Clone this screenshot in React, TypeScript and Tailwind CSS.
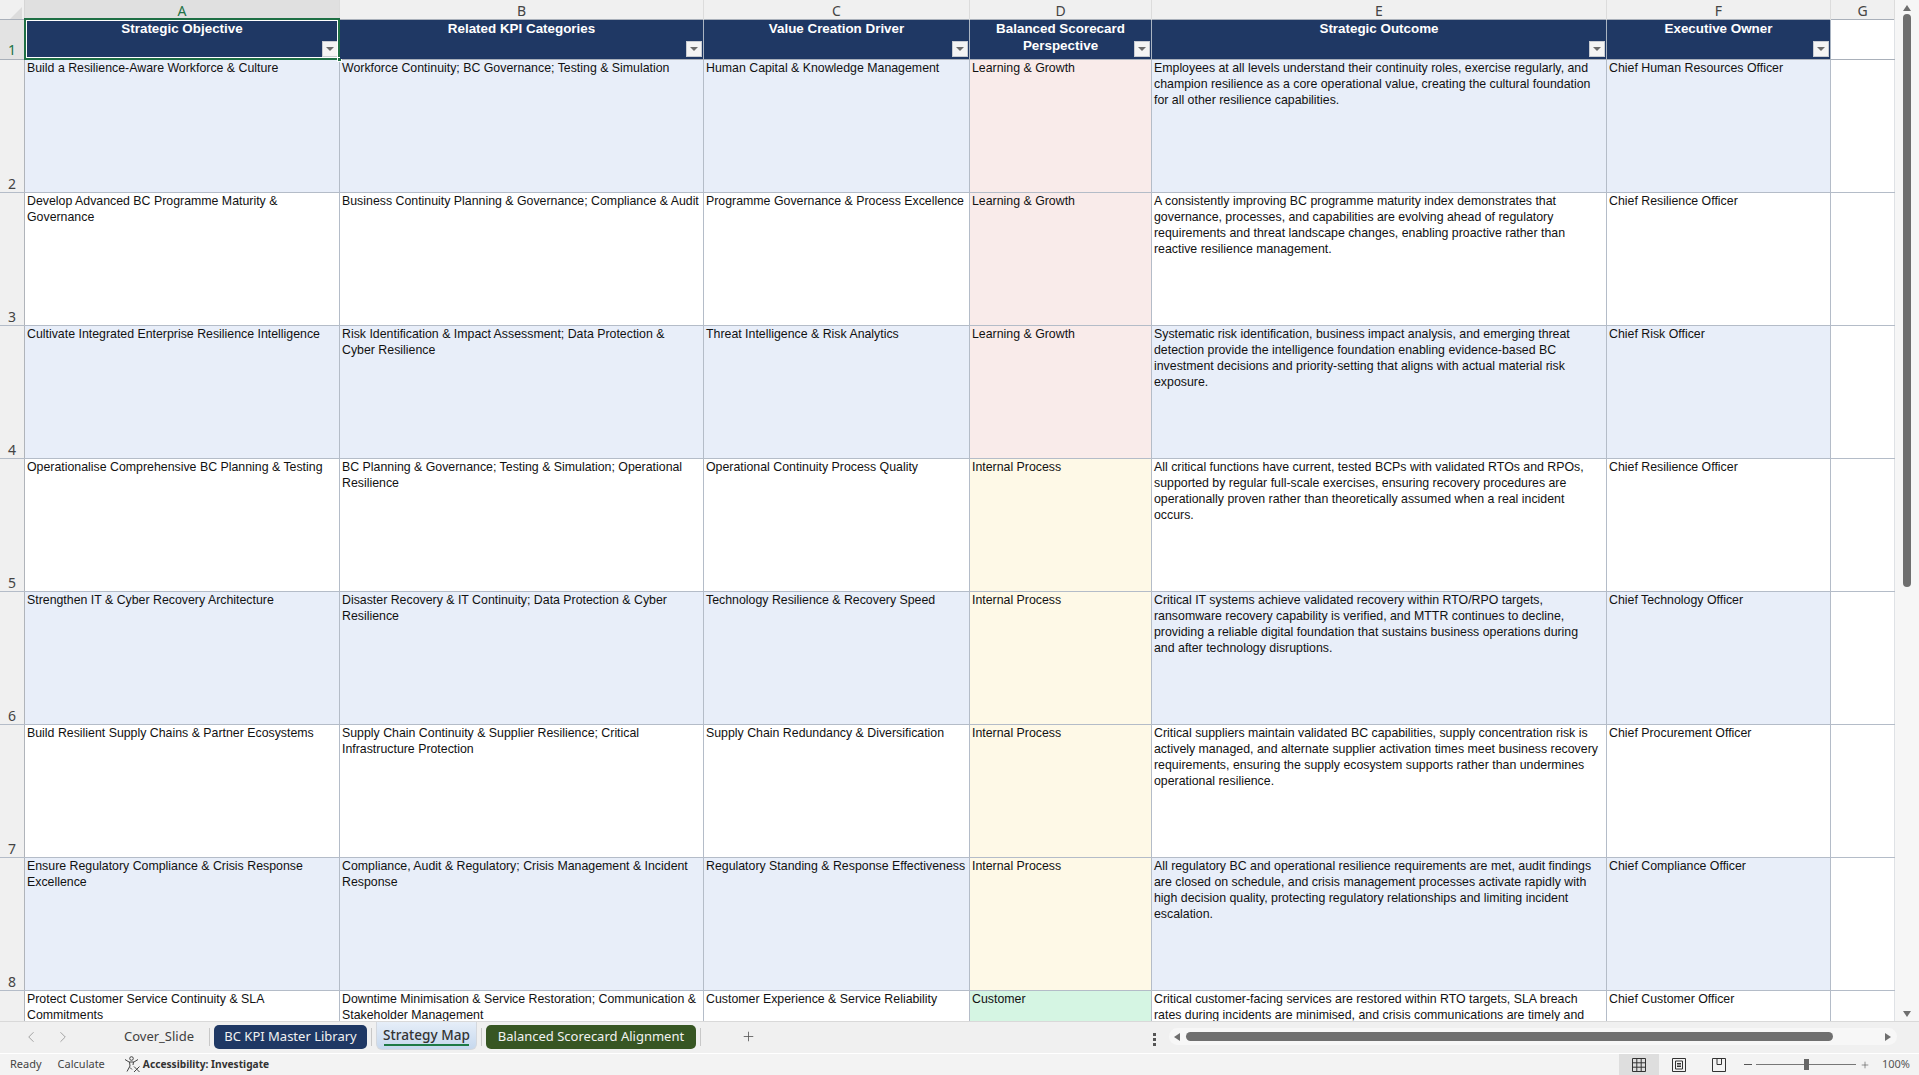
import { ChevronLeft, ChevronRight, Plus } from "lucide-react";

const gridCols = "grid grid-cols-[25px_315px_364px_266px_182px_455px_224px_64px]";

const columns = ["A", "B", "C", "D", "E", "F", "G"];

const headers = [
  "Strategic Objective",
  "Related KPI Categories",
  "Value Creation Driver",
  "Balanced Scorecard Perspective",
  "Strategic Outcome",
  "Executive Owner",
];

const perspectiveBg: Record<string, string> = {
  "Learning & Growth": "bg-[#f9ebea]",
  "Internal Process": "bg-[#fef9e7]",
  Customer: "bg-[#d5f5e3]",
};

const rows = [
  {
    n: 2,
    cells: [
      "Build a Resilience-Aware Workforce & Culture",
      "Workforce Continuity; BC Governance; Testing & Simulation",
      "Human Capital & Knowledge Management",
      "Learning & Growth",
      "Employees at all levels understand their continuity roles, exercise regularly, and champion resilience as a core operational value, creating the cultural foundation for all other resilience capabilities.",
      "Chief Human Resources Officer",
    ],
  },
  {
    n: 3,
    cells: [
      "Develop Advanced BC Programme Maturity & Governance",
      "Business Continuity Planning & Governance; Compliance & Audit",
      "Programme Governance & Process Excellence",
      "Learning & Growth",
      "A consistently improving BC programme maturity index demonstrates that governance, processes, and capabilities are evolving ahead of regulatory requirements and threat landscape changes, enabling proactive rather than reactive resilience management.",
      "Chief Resilience Officer",
    ],
  },
  {
    n: 4,
    cells: [
      "Cultivate Integrated Enterprise Resilience Intelligence",
      "Risk Identification & Impact Assessment; Data Protection &\nCyber Resilience",
      "Threat Intelligence & Risk Analytics",
      "Learning & Growth",
      "Systematic risk identification, business impact analysis, and emerging threat detection provide the intelligence foundation enabling evidence-based BC investment decisions and priority-setting that aligns with actual material risk exposure.",
      "Chief Risk Officer",
    ],
  },
  {
    n: 5,
    cells: [
      "Operationalise Comprehensive BC Planning & Testing",
      "BC Planning & Governance; Testing & Simulation; Operational Resilience",
      "Operational Continuity Process Quality",
      "Internal Process",
      "All critical functions have current, tested BCPs with validated RTOs and RPOs, supported by regular full-scale exercises, ensuring recovery procedures are operationally proven rather than theoretically assumed when a real incident occurs.",
      "Chief Resilience Officer",
    ],
  },
  {
    n: 6,
    cells: [
      "Strengthen IT & Cyber Recovery Architecture",
      "Disaster Recovery & IT Continuity; Data Protection & Cyber Resilience",
      "Technology Resilience & Recovery Speed",
      "Internal Process",
      "Critical IT systems achieve validated recovery within RTO/RPO targets, ransomware recovery capability is verified, and MTTR continues to decline, providing a reliable digital foundation that sustains business operations during\nand after technology disruptions.",
      "Chief Technology Officer",
    ],
  },
  {
    n: 7,
    cells: [
      "Build Resilient Supply Chains & Partner Ecosystems",
      "Supply Chain Continuity & Supplier Resilience; Critical Infrastructure Protection",
      "Supply Chain Redundancy & Diversification",
      "Internal Process",
      "Critical suppliers maintain validated BC capabilities, supply concentration risk is actively managed, and alternate supplier activation times meet business recovery requirements, ensuring the supply ecosystem supports rather than undermines operational resilience.",
      "Chief Procurement Officer",
    ],
  },
  {
    n: 8,
    cells: [
      "Ensure Regulatory Compliance & Crisis Response Excellence",
      "Compliance, Audit & Regulatory; Crisis Management & Incident Response",
      "Regulatory Standing & Response Effectiveness",
      "Internal Process",
      "All regulatory BC and operational resilience requirements are met, audit findings are closed on schedule, and crisis management processes activate rapidly with high decision quality, protecting regulatory relationships and limiting incident escalation.",
      "Chief Compliance Officer",
    ],
  },
  {
    n: 9,
    cells: [
      "Protect Customer Service Continuity & SLA Commitments",
      "Downtime Minimisation & Service Restoration; Communication & Stakeholder Management",
      "Customer Experience & Service Reliability",
      "Customer",
      "Critical customer-facing services are restored within RTO targets, SLA breach rates during incidents are minimised, and crisis communications are timely and transparent.",
      "Chief Customer Officer",
    ],
  },
];

function FilterButton() {
  return (
    <span className="absolute bottom-[2px] right-[1px] flex h-[16px] w-[16px] items-center justify-center border border-[#c8ccd2] bg-[#f4f4f4]">
      <span className="h-0 w-0 border-x-[4px] border-t-[4px] border-x-transparent border-t-[#6b6b6b]" />
    </span>
  );
}

function HeaderRow() {
  return (
    <div className={`${gridCols} h-[40px] shrink-0 border-b border-[#a9b0ba]`}>
      <div className="flex items-end justify-center border-r border-[#a9b0ba] bg-[#e3e3e3] text-[14px] leading-[19px] text-[#217346] font-['Noto_Sans',sans-serif]">
        1
      </div>
      {headers.map((h, i) => (
        <div
          key={h}
          className="relative border-r border-[#a9b4c2] bg-[#1f3864] px-[20px] text-center text-[13.4px] font-bold leading-[17px] text-white"
        >
          <div>{h}</div>
          <FilterButton />
          {i === 0 && (
            <>
              <span className="pointer-events-none absolute inset-x-[-1px] bottom-[-1px] top-[-2px] border-2 border-[#1e6f44] outline outline-1 -outline-offset-3 outline-white" />
              <span className="absolute bottom-[-3px] right-[-3px] h-[5px] w-[5px] border border-white bg-[#1e6f44]" />
            </>
          )}
        </div>
      ))}
      <div className="border-r border-[#dfe2e6] bg-white" />
    </div>
  );
}

function DataRow({ n, cells }: { n: number; cells: string[] }) {
  const striped = n % 2 === 0;
  return (
    <div className={`${gridCols} h-[133px] shrink-0 border-b border-[#b4bcc8]`}>
      <div className="flex items-end justify-center border-r border-[#b0b4ba] bg-[#f0f0f0] text-[14px] leading-[17px] text-[#444] font-['Noto_Sans',sans-serif]">
        {n}
      </div>
      {cells.map((c, i) => (
        <div
          key={i}
          className={`overflow-hidden whitespace-pre-line border-r border-[#b4bcc8] px-[2px] text-[12.35px] leading-[16px] text-[#111] ${
            i === 3 ? perspectiveBg[c] : striped ? "bg-[#e8eef9]" : "bg-white"
          }`}
        >
          {c}
        </div>
      ))}
      <div className="border-r border-[#dfe2e6] bg-white" />
    </div>
  );
}

function VerticalScrollbar() {
  return (
    <div className="flex w-[24px] flex-col items-center bg-[#f6f6f6]">
      <span className="mt-[5px] h-0 w-0 border-x-[4px] border-b-[6px] border-x-transparent border-b-[#6f6f6f]" />
      <div className="mt-[3px] h-[573px] w-[8px] rounded-full bg-[#6f6f6f]" />
      <span className="mt-auto mb-[4px] h-0 w-0 border-x-[4px] border-t-[6px] border-x-transparent border-t-[#6f6f6f]" />
    </div>
  );
}

function Tab({ label, className }: { label: string; className: string }) {
  return (
    <div className={`flex h-[24px] items-center justify-center rounded-[5px] text-[13px] ${className}`}>
      {label}
    </div>
  );
}

function TabBar() {
  return (
    <div className="flex h-[32px] shrink-0 items-start border-t border-[#d9d9d9] bg-[#f0f0f0] font-['Noto_Sans',sans-serif] text-[#333]">
      <ChevronLeft className="ml-[22px] mt-[6px] h-[18px] w-[18px] text-[#a0a0a0]" strokeWidth={1.3} />
      <ChevronRight className="ml-[14px] mt-[6px] h-[18px] w-[18px] text-[#a0a0a0]" strokeWidth={1.3} />
      <Tab label="Cover_Slide" className="ml-[44px] mt-[3px] w-[86px] text-[#404040]" />
      <span className="ml-[7px] mt-[6px] h-[18px] w-px bg-[#c8c8c8]" />
      <Tab label="BC KPI Master Library" className="ml-[4px] mt-[3px] w-[153px] bg-[#1f3864] text-[#f2f2f2]" />
      <span className="ml-[4px] mt-[6px] h-[18px] w-px bg-[#c8c8c8]" />
      <div className="relative ml-[4px] h-[28px] w-[101px] rounded-b-[6px] border border-t-0 border-[#d4d8de] bg-gradient-to-b from-[#e6eef8] to-[#c6d8ee] text-center text-[13.6px] font-medium leading-[25px] text-[#333]">
        Strategy Map
        <span className="absolute inset-x-[7px] bottom-[3px] h-[2px] bg-[#1e7a46]" />
      </div>
      <span className="ml-[4px] mt-[6px] h-[18px] w-px bg-[#c8c8c8]" />
      <Tab label="Balanced Scorecard Alignment" className="ml-[4px] mt-[3px] w-[210px] bg-[#375623] text-[#f2f2f2]" />
      <span className="ml-[4px] mt-[6px] h-[18px] w-px bg-[#c8c8c8]" />
      <Plus className="ml-[40px] mt-[7px] h-[15px] w-[15px] text-[#555]" strokeWidth={1.3} />
      <div className="ml-[397px] mt-[11px] flex w-[3px] flex-col gap-[2px]">
        <span className="h-[3px] w-[3px] bg-[#555]" />
        <span className="h-[3px] w-[3px] bg-[#555]" />
        <span className="h-[3px] w-[3px] bg-[#555]" />
      </div>
      <div className="ml-[13px] mt-[6px] flex h-[17px] w-[728px] items-center rounded-full bg-[#f7f7f7]">
        <span className="ml-[5px] h-0 w-0 border-y-[4px] border-r-[6px] border-y-transparent border-r-[#6f6f6f]" />
        <div className="ml-[6px] h-[9px] w-[647px] rounded-full bg-[#6f6f6f]" />
        <span className="ml-auto mr-[6px] h-0 w-0 border-y-[4px] border-l-[6px] border-y-transparent border-l-[#6f6f6f]" />
      </div>
    </div>
  );
}

function StatusBar() {
  return (
    <div className="flex h-[22px] shrink-0 items-center border-t border-white bg-[#f3f3f3] font-['Noto_Sans',sans-serif] text-[11px] text-[#444]">
      <span className="ml-[10px]">Ready</span>
      <span className="ml-[16px]">Calculate</span>
      <svg className="ml-[19px] h-[17px] w-[17px]" viewBox="0 0 17 17" fill="none" stroke="#444" strokeWidth="1">
        <circle cx="7.500" cy="2.500" r="1.800" />
        <path d="M1 3.500l4 2.500h5l4-2.500M5.500 6l.5 4-3 5.500M9.500 6l-.5 3" />
        <path d="M10 10.500l5.500 5.500M15.500 10.500L10 16M6 11.500l2 2" />
      </svg>
      <span className="ml-[2px] text-[10.2px] font-bold text-[#333]">Accessibility: Investigate</span>
      <div className="ml-auto flex h-full items-center">
        <div className="flex h-full w-[40px] items-center justify-center bg-[#dedede]">
          <svg className="h-[14px] w-[14px]" viewBox="0 0 14 14" fill="none" stroke="#333">
            <path d="M.5.5h13v13H.5zM.5 4.800h13M.5 9.200h13M4.800.5v13M9.200.5v13" />
          </svg>
        </div>
        <div className="flex h-full w-[40px] items-center justify-center">
          <svg className="h-[14px] w-[14px]" viewBox="0 0 14 14" fill="none" stroke="#333">
            <path d="M.5.5h13v13H.5zM3.500 3h7v8h-7zM5 5.500h4M5 7h4M5 8.500h4" />
          </svg>
        </div>
        <div className="flex h-full w-[40px] items-center justify-center">
          <svg className="h-[14px] w-[14px]" viewBox="0 0 14 14" fill="none" stroke="#333">
            <path d="M.5.5h13v13H.5zM5 .5v6h4.500v-6" />
          </svg>
        </div>
        <span className="ml-[5px] h-px w-[8px] bg-[#555]" />
        <div className="relative ml-[4px] h-px w-[100px] bg-[#777]">
          <span className="absolute left-[48px] top-[-5px] h-[11px] w-[5px] bg-[#666]" />
        </div>
        <Plus className="ml-[4px] h-[10px] w-[10px] text-[#555]" strokeWidth={1.5} />
        <span className="ml-[12px] mr-[9px] text-[11px] text-[#555]">100%</span>
      </div>
    </div>
  );
}

export default function App() {
  return (
    <div className="flex h-[1075px] w-[1919px] flex-col overflow-hidden bg-white font-['Liberation_Sans',Arial,sans-serif]">
      <div className="flex h-[1021px] shrink-0">
        <div className="flex w-[1895px] flex-col overflow-hidden">
          <div className={`${gridCols} h-[20px] shrink-0 border-b border-[#a9b0ba] bg-[#f0f0f0] font-['Noto_Sans',sans-serif] text-[14px] leading-[21px] text-[#444]`}>
            <div className="relative border-r border-[#d6d6d6]">
              <span className="absolute bottom-[2px] right-[2px] h-0 w-0 border-b-[12px] border-l-[12px] border-b-[#dcdcdc] border-l-transparent" />
            </div>
            {columns.map((c, i) => (
              <div
                key={c}
                className={`border-r border-[#dcdcdc] text-center ${i === 0 ? "bg-[#e0e0e0] text-[#217346]" : ""}`}
              >
                {c}
              </div>
            ))}
          </div>
          <HeaderRow />
          {rows.map((r) => (
            <DataRow key={r.n} n={r.n} cells={r.cells} />
          ))}
        </div>
        <VerticalScrollbar />
      </div>
      <TabBar />
      <StatusBar />
    </div>
  );
}
